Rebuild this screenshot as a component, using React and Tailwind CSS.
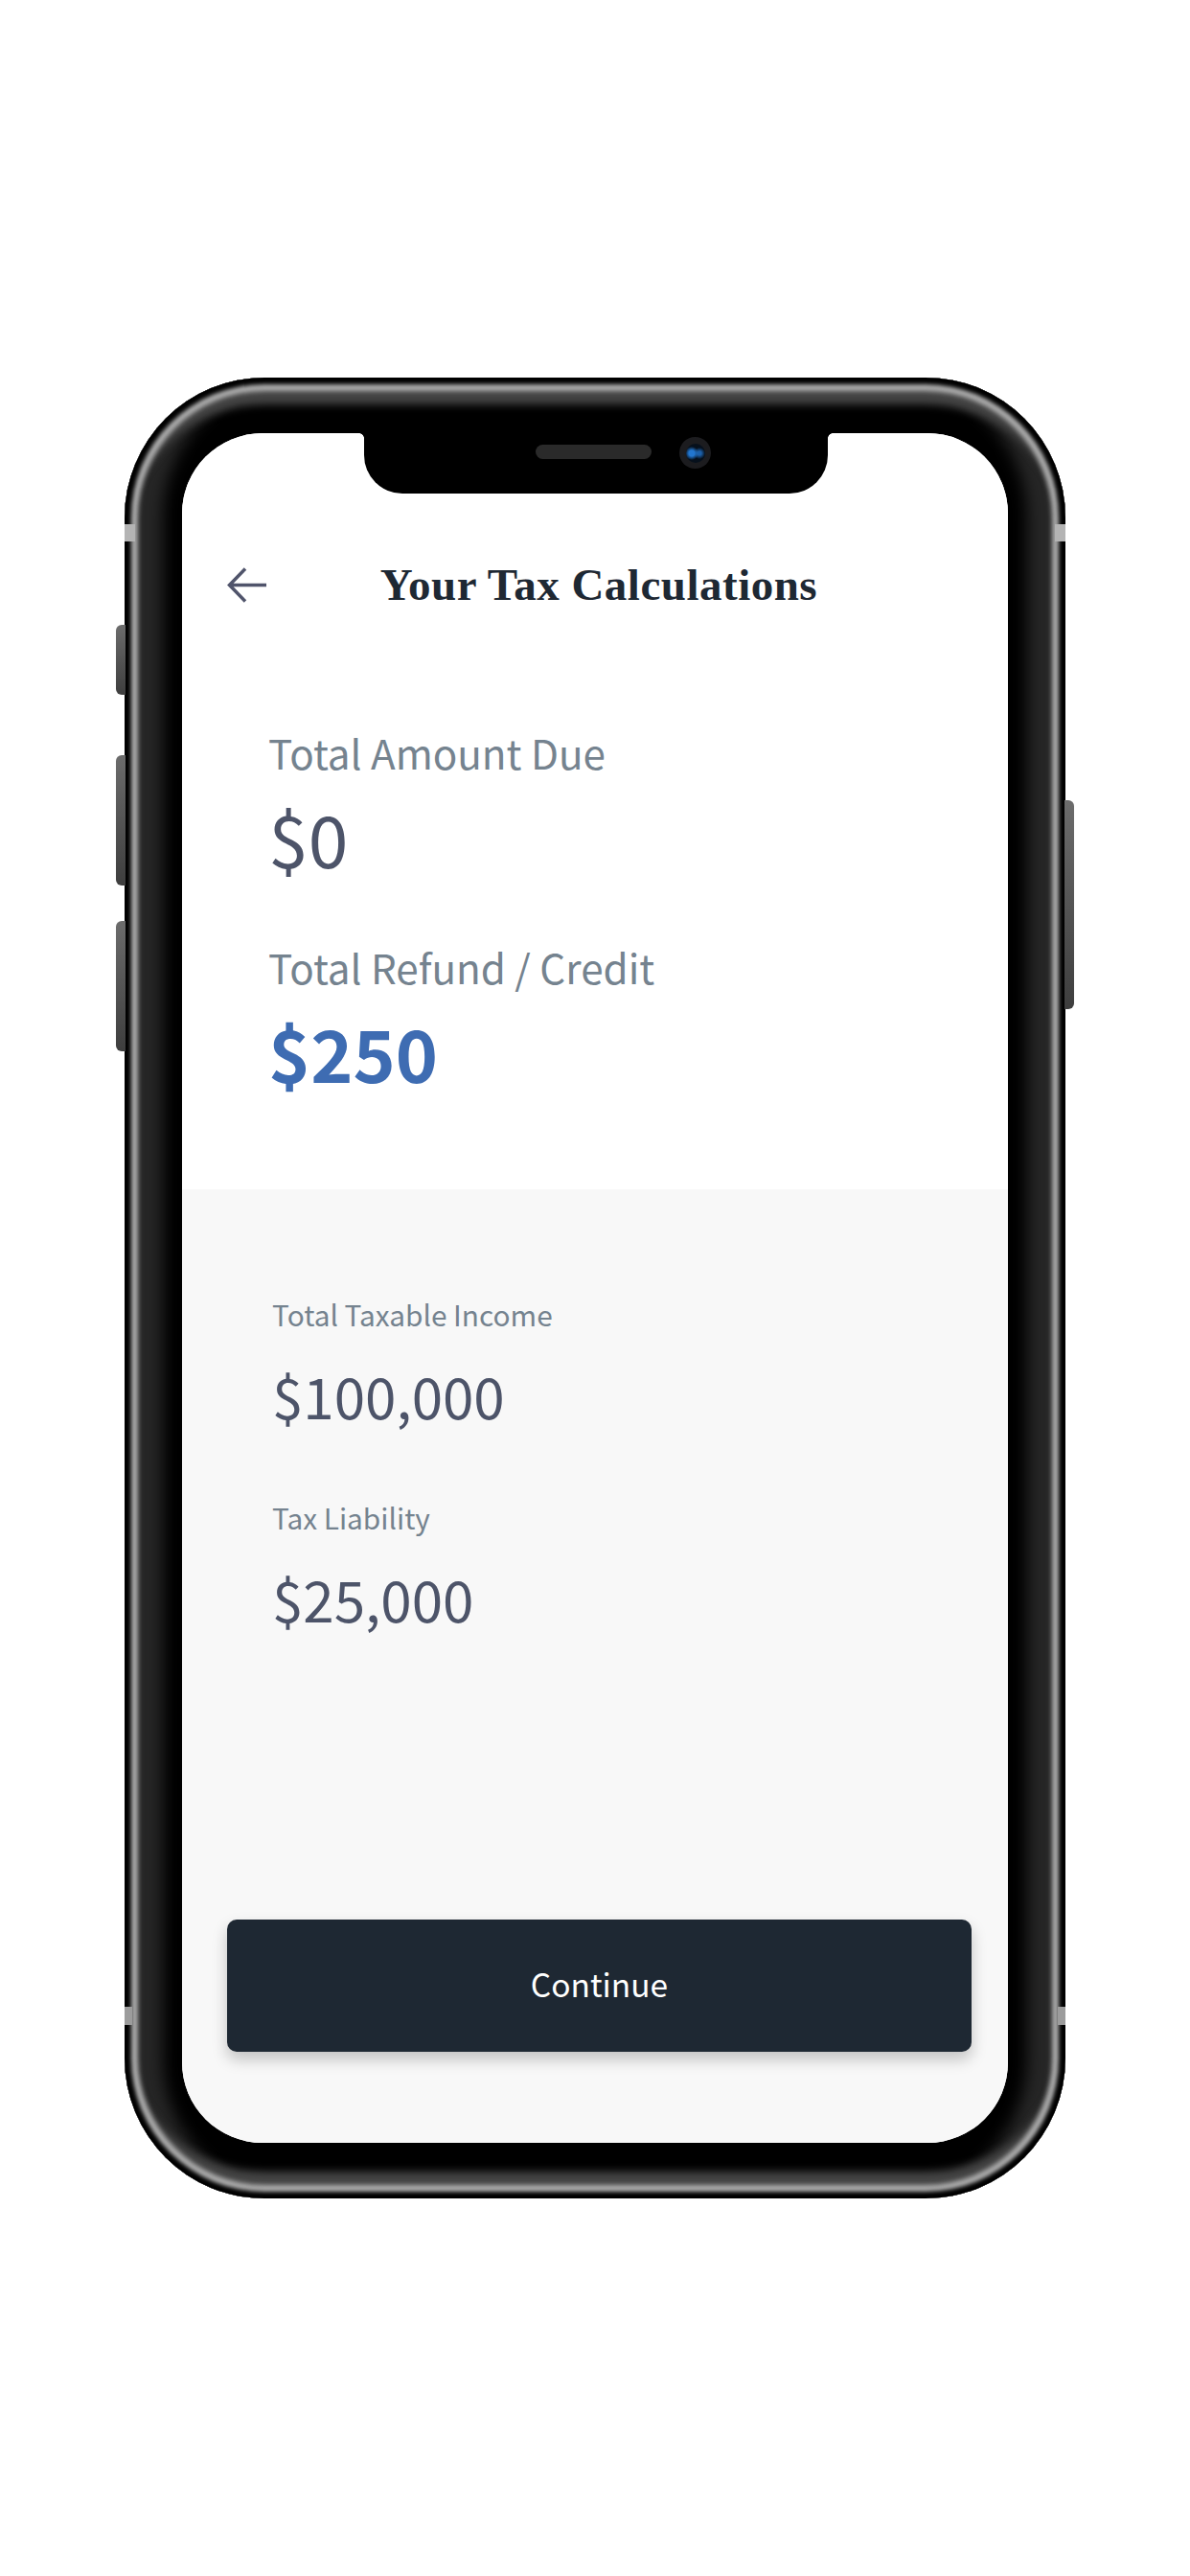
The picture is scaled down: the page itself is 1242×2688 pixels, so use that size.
const bezel =
  "shadow-[inset_0_0_4px_7px_#000,inset_0_0_5px_14px_#b0b0b0,inset_0_28px_8px_#454545,inset_0_-28px_8px_#454545,inset_40px_0_16px_#262626,inset_-40px_0_16px_#262626]";
const btn = "from-[#6c6c6c] to-[#3e3e3e]";

function Big({ label, value, bold }) {
  return (
    <div className="flex flex-col gap-[9px]">
      <div className="text-[42.2px] leading-[60px] text-[#75838f]">{label}</div>
      <div className={bold ? "text-[75px] leading-[100px] font-bold text-[#3e6cb2]" : "text-[75px] leading-[100px] text-[#4d5469]"}>{value}</div>
    </div>
  );
}

function Small({ label, value }) {
  return (
    <div className="flex flex-col gap-[21px]">
      <div className="text-[29.8px] leading-[44px] text-[#75838f]">{label}</div>
      <div className="text-[58.3px] leading-[84px] text-[#4d5469]">{value}</div>
    </div>
  );
}

export default function App() {
  return (
    <div className="w-[1242px] h-[2688px] bg-white pt-[394px] pl-[130px] font-['Noto_Sans_CJK_SC',sans-serif]">
      <div className={`relative w-[982px] h-[1900px] rounded-[146px] bg-black pt-[58px] pl-[60px] ${bezel}`}>
        {/* side buttons */}
        <div className={`absolute left-[-9px] top-[258px] w-[10px] h-[73px] rounded-l-[6px] bg-gradient-to-b ${btn}`} />
        <div className={`absolute left-[-9px] top-[394px] w-[10px] h-[136px] rounded-l-[6px] bg-gradient-to-b ${btn}`} />
        <div className={`absolute left-[-9px] top-[567px] w-[10px] h-[136px] rounded-l-[6px] bg-gradient-to-b ${btn}`} />
        <div className={`absolute right-[-9px] top-[441px] w-[10px] h-[218px] rounded-r-[6px] bg-gradient-to-b ${btn}`} />
        {/* antenna bands */}
        <div className="absolute left-0 top-[153px] w-[11px] h-[18px] bg-[#b4b4b4]" />
        <div className="absolute right-0 top-[153px] w-[11px] h-[18px] bg-[#b4b4b4]" />
        <div className="absolute left-0 top-[1700px] w-[8px] h-[19px] bg-[#9c9c9c]" />
        <div className="absolute right-0 top-[1700px] w-[8px] h-[19px] bg-[#9c9c9c]" />

        <div className="relative w-[862px] h-[1784px] rounded-[84px] overflow-hidden bg-white flex flex-col">
          {/* notch */}
          <div className="absolute left-[190px] top-0 w-[484px] h-[63px] bg-black rounded-b-[40px] flex items-start">
            <div className="absolute left-[-5px] top-0 w-[5px] h-[5px] bg-[radial-gradient(circle_at_0_100%,#fff_4.5px,#000_5px)]" />
            <div className="absolute right-[-5px] top-0 w-[5px] h-[5px] bg-[radial-gradient(circle_at_100%_100%,#fff_4.5px,#000_5px)]" />
            <div className="ml-[179px] mt-[12px] w-[121px] h-[15px] rounded-full bg-[#2a2a2a]" />
            <div className="ml-[29px] mt-[4px] w-[33px] h-[33px] rounded-full bg-[#1c1c1f] flex items-center justify-center">
              <div className="w-[20px] h-[20px] rounded-full bg-[radial-gradient(circle_at_30%_50%,#2276cf_0,#2276cf_3px,transparent_7px),radial-gradient(circle_at_70%_50%,#1c5fa8_0,#1c5fa8_2px,transparent_6px),linear-gradient(#06101c,#06101c)]" />
            </div>
          </div>

          <div className="h-[789px] bg-white shrink-0 flex flex-col pt-[128px]">
            <div className="grid grid-cols-[1fr_auto_1fr] items-center h-[60px]">
              <svg className="ml-[47px]" width="41" height="37" viewBox="0 0 41 37" fill="none" stroke="#50546b" strokeWidth="3.5">
                <path d="M41 18.5H2.5M19 1.5L2.5 18.5L19 35.5" />
              </svg>
              <h1 className="pl-[8px] font-['Liberation_Serif',serif] font-bold text-[#1e2833] text-[47px] leading-[60px] tracking-[0.5px]">Your Tax Calculations</h1>
              <div />
            </div>
            <div className="mt-[115px] pl-[90px] flex flex-col gap-[55px]">
              <Big label="Total Amount Due" value="$0" />
              <Big label="Total Refund / Credit" value="$250" bold />
            </div>
          </div>

          <div className="flex-1 bg-[#f8f8f8] flex flex-col pl-[47px] pb-[95px]">
            <div className="pl-[47px] pt-[108px] flex flex-col gap-[63px]">
              <Small label="Total Taxable Income" value="$100,000" />
              <Small label="Tax Liability" value="$25,000" />
            </div>
            <button className="mt-auto w-[777px] h-[138px] pb-[3px] rounded-[10px] bg-[#1e2833] text-white text-[33.5px] shadow-[0_8px_16px_rgba(0,0,0,0.22)]">Continue</button>
          </div>
        </div>
      </div>
    </div>
  );
}
